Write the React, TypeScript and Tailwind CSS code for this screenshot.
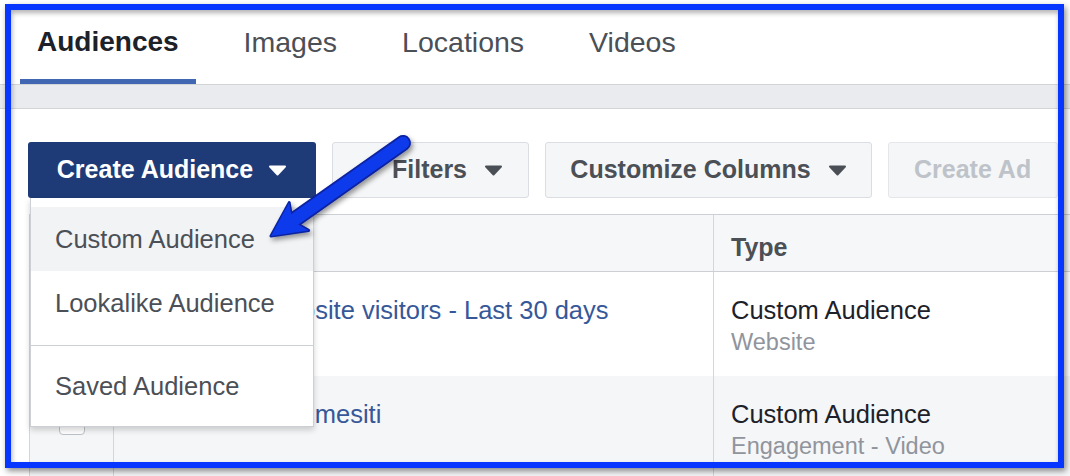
import React from 'react';

const tabs = ['Audiences', 'Images', 'Locations', 'Videos'];

const rows = [
  { name: 'Company Website visitors - Last 30 days', type: 'Custom Audience', source: 'Website', bg: 'bg-white' },
  { name: 'Video Views – mesiti', type: 'Custom Audience', source: 'Engagement - Video', bg: 'bg-[#f5f6f7]' },
];

const Caret = ({ className }: { className: string }) => (
  <svg width="19" height="11" viewBox="0 0 19 11" className={className}>
    <path d="M2 1.5h15l-7.5 8z" fill="currentColor" stroke="currentColor" strokeWidth="2" strokeLinejoin="round" />
  </svg>
);

const Checkbox = () => (
  <div className="h-[26px] w-[26px] rounded-[4px] border border-[#bec3c9] bg-white" />
);

const Arrow = () => (
  // annotation arrow drawn over the screenshot
  <svg className="pointer-events-none absolute left-0 top-0 z-20" width="1070" height="476" viewBox="0 0 1070 476">
    <defs>
      <filter id="arrowShadow" x="-20%" y="-20%" width="140%" height="140%">
        <feDropShadow dx="2" dy="3" stdDeviation="2.5" floodColor="#000" floodOpacity="0.4" />
      </filter>
    </defs>
    <g filter="url(#arrowShadow)">
      <line x1="292.3" y1="221.1" x2="403" y2="143" stroke="#0a22a0" strokeWidth="16" strokeLinecap="round" />
      <polygon points="271,236 289.2,202.6 292.3,221.1 308.6,230.4" fill="#0a22a0" stroke="#0a22a0" strokeWidth="3" strokeLinejoin="round" />
      <line x1="292.3" y1="221.1" x2="403" y2="143" stroke="#0b3bec" strokeWidth="12.5" strokeLinecap="round" />
      <polygon points="271,236 289.2,202.6 292.3,221.1 308.6,230.4" fill="#0b3bec" />
    </g>
  </svg>
);

export default function App() {
  return (
    <div className="relative h-[476px] w-[1070px] overflow-hidden bg-white font-['Liberation_Sans',Arial,sans-serif]">
      {/* tabs */}
      <div className="flex gap-[31px] pl-[20px] pt-[25px]">
        {tabs.map((t, i) => (
          <div
            key={t}
            className={
              i === 0
                ? 'border-b-[5px] border-[#4267b2] px-[17px] pb-[20px] text-[28px] font-bold leading-[34px] text-[#1d2129]'
                : 'border-b-[5px] border-transparent px-[17px] pb-[20px] text-[28.5px] leading-[34px] text-[#4b4f56]'
            }
          >
            {t}
          </div>
        ))}
      </div>
      <div className="h-[25px] border-y border-[#d3d4d6] bg-[#e9ebee]" />

      {/* toolbar */}
      <div className="flex gap-[16px] pl-[28px] pt-[33px]">
        <div className="relative z-10">
          <button className="flex h-[56px] w-[288px] items-center justify-center gap-[15px] rounded-[3px] bg-[#1f3b77] text-[25px] font-bold text-white">
            Create Audience
            <Caret className="text-white" />
          </button>
          <div className="absolute left-[2px] top-full w-[284px] border border-t-0 border-[#ccd0d5] bg-white pb-[8px] pt-[9px] shadow-[0_3px_6px_rgba(0,0,0,0.18)]">
            <div className="h-[64px] bg-[#f2f3f5] pl-[24px] text-[25.5px] leading-[64px] text-[#4b4f56]">Custom Audience</div>
            <div className="h-[64px] pl-[24px] text-[25.5px] leading-[64px] text-[#4b4f56]">Lookalike Audience</div>
            <div className="h-[10px]" />
            <div className="border-t border-[#ccd0d5] pt-[8px]">
              <div className="h-[64px] pl-[24px] text-[25.5px] leading-[64px] text-[#4b4f56]">Saved Audience</div>
            </div>
          </div>
        </div>
        <button className="flex h-[56px] w-[197px] items-center gap-[17px] rounded-[3px] border border-[#dadde1] bg-[#f5f6f7] pl-[59px] text-[25px] font-bold text-[#4b4f56]">
          Filters
          <Caret className="text-[#4b4f56]" />
        </button>
        <button className="flex h-[56px] w-[327px] items-center justify-center gap-[17px] rounded-[3px] border border-[#dadde1] bg-[#f5f6f7] text-[25px] font-bold text-[#4b4f56]">
          Customize Columns
          <Caret className="text-[#4b4f56]" />
        </button>
        <button className="flex h-[56px] w-[170px] shrink-0 items-center rounded-[3px] border border-[#e5e6e9] bg-[#f5f6f7] pl-[25px] text-[25px] font-bold text-[#bec3c9]">
          Create Ad
        </button>
      </div>

      {/* table */}
      <div className="ml-[29px] mt-[16px] w-[1100px] border-l border-[#d3d6db]">
        <div className="flex h-[58px] border-y border-[#ccd0d5] bg-[#f6f7f9] text-[25px] font-bold leading-[32px] text-[#4b4f56]">
          <div className="flex w-[84px] items-center justify-center border-r border-[#d3d6db]">
            <Checkbox />
          </div>
          <div className="w-[600px] border-r border-[#d3d6db] pl-[33px] pt-[16px]">Name</div>
          <div className="flex-1 pl-[17px] pt-[16px]">Type</div>
        </div>
        {rows.map(r => (
          <div key={r.name} className={`flex h-[104px] ${r.bg}`}>
            <div className="flex w-[84px] justify-center border-r border-[#d3d6db] pt-[33px]">
              <Checkbox />
            </div>
            <div className="w-[600px] border-r border-[#d3d6db] pl-[33px] pt-[22px] text-[25.5px] leading-[32px] text-[#365899]">
              {r.name}
            </div>
            <div className="flex-1 pl-[17px] pt-[22px] leading-[32px]">
              <div className="text-[25.5px] text-[#1d2129]">{r.type}</div>
              <div className="text-[23.5px] text-[#90949c]">{r.source}</div>
            </div>
          </div>
        ))}
      </div>

      <Arrow />

      {/* highlight frame */}
      <div className="pointer-events-none absolute left-[5px] top-[4px] z-30 h-[464px] w-[1059px] border-[6px] border-[#0636ff] shadow-[2px_3px_6px_rgba(0,0,0,0.45),inset_1px_3px_5px_rgba(0,0,0,0.3)]" />
    </div>
  );
}
